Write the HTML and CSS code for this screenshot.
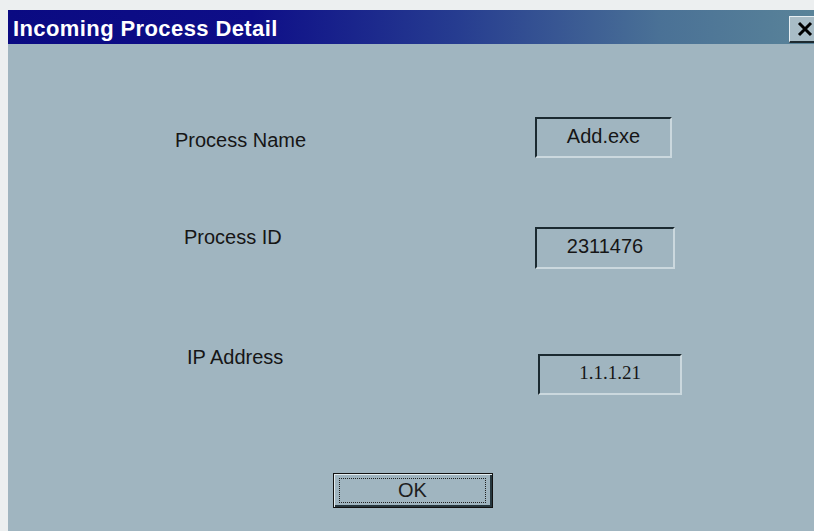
FILE: index.html
```html
<!DOCTYPE html>
<html lang="en">
<head>
<meta charset="utf-8">
<title>Incoming Process Detail</title>
<link rel="stylesheet" href="styles.css">
</head>
<body>
<div class="window">
  <div class="titlebar">
    <span class="title">Incoming Process Detail</span>
    <button class="close" type="button" aria-label="Close">
      <svg width="20" height="16" viewBox="0 0 20 16"><path d="M3 2 L15 14 M15 2 L3 14" stroke="#000" stroke-width="3" fill="none"/></svg>
    </button>
  </div>
  <div class="content">
    <div class="row row-name">
      <div class="label">Process Name</div>
      <div class="field">Add.exe</div>
    </div>
    <div class="row row-pid">
      <div class="label">Process ID</div>
      <div class="field">2311476</div>
    </div>
    <div class="row row-ip">
      <div class="label">IP Address</div>
      <div class="field serif">1.1.1.21</div>
    </div>
    <div class="actions">
      <button class="ok" type="button"><span class="focus">OK</span></button>
    </div>
  </div>
</div>
</body>
</html>
```
FILE: styles.css
```css
html, body {
  margin: 0;
  height: 100%;
}

body {
  background: #eceff0;
  overflow: hidden;
  font-family: "Liberation Sans", Arial, sans-serif;
}

.window {
  margin: 10px -8px 0 8px;
  height: calc(100% - 10px);
  background: #a0b5c0;
  display: flex;
  flex-direction: column;
}

.titlebar {
  height: 34px;
  flex: none;
  display: flex;
  align-items: flex-start;
  background: linear-gradient(90deg, #0a0a82 0%, #0e0e88 30%, #263c90 55%, #4a7196 80%, #5a8499 100%);
}

.title {
  flex: 1;
  padding: 4px 0 0 5px;
  line-height: 30px;
  font-size: 22px;
  font-weight: bold;
  letter-spacing: 0.4px;
  color: #fff;
}

.close {
  margin: 6px 0 0 0;
  width: 33px;
  height: 27px;
  padding: 0 0 0 4px;
  background: #a8bcc6;
  border: 0;
  border-top: 1px solid #e6eef2;
  border-left: 1px solid #e6eef2;
  border-bottom: 2px solid #1d2a30;
  display: flex;
  align-items: center;
  justify-content: flex-start;
}

.close svg {
  display: block;
  margin-left: 2px;
}

.content {
  flex: 1;
  padding-top: 73px;
}

.row {
  display: grid;
  grid-template-columns: 527px auto;
  align-items: start;
}

.label {
  font-size: 20px;
  line-height: 24px;
  color: #161616;
}

.field {
  box-sizing: border-box;
  height: 41px;
  padding-bottom: 4px;
  display: flex;
  align-items: center;
  justify-content: center;
  font-size: 20px;
  line-height: 24px;
  color: #161616;
  border-top: 2px solid #1b2a31;
  border-left: 2px solid #1b2a31;
  border-right: 2px solid #cbd8de;
  border-bottom: 2px solid #cbd8de;
}

.serif {
  font-family: "Liberation Serif", "Times New Roman", serif;
  font-size: 19px;
}

.row-name .label { margin: 11px 0 0 167px; }
.row-name .field { width: 137px; }

.row-pid { margin-top: 67px; }
.row-pid .label { margin-left: 176px; }
.row-pid .field { width: 140px; height: 42px; margin-top: 2px; }

.row-ip { margin-top: 76px; }
.row-ip .label { margin-left: 179px; }
.row-ip .field { width: 144px; margin: 9px 0 0 3px; }

.actions {
  margin: 78px 0 0 325px;
}

.ok {
  box-sizing: border-box;
  width: 160px;
  height: 35px;
  padding: 4px 6px 4px 5px;
  background: #a0b5c0;
  border: 1px solid #111;
  box-shadow: inset 1px 1px #e2ecf0, inset -2px -2px #26363d;
  font-family: "Liberation Sans", Arial, sans-serif;
  font-size: 20px;
  color: #1e1e1e;
  display: flex;
}

.focus {
  flex: 1;
  border: 1px dotted #222;
  line-height: 23px;
  text-align: center;
}
```
